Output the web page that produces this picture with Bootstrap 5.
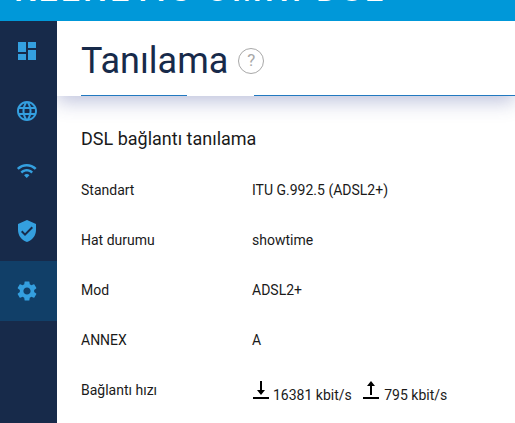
<!DOCTYPE html>
<html lang="tr">
<head>
<meta charset="utf-8">
<link href="https://cdn.jsdelivr.net/npm/bootstrap@5.3.0/dist/css/bootstrap.min.css" rel="stylesheet">
<style>
html,body{height:423px;overflow:hidden;margin:0}
body{font-family:Roboto,sans-serif;color:#1a1a1a;background:#fff}
.topband{height:21px;background:#0098d9;overflow:hidden;flex:none}
.brandtext{color:#fff;font-size:34px;line-height:34px;font-weight:500;letter-spacing:3px;margin-top:-28px;padding-left:14px;white-space:nowrap}
.shell{height:402px}
.siderail{width:57px;background:#172a4a;flex:none}
.railitem{height:60px;color:#349fdf;padding-right:3px}
.railitem.active-item{background:#113f68}
.railitem svg{width:24px;height:24px;fill:currentColor}
.railitem svg.wifiglyph{width:21.5px;height:21.5px}
.mainpane{min-width:0;overflow:hidden}
.headbar{height:75px;padding:4px 0 0 24px;box-shadow:0 6px 18px rgba(60,72,150,.32);position:relative;z-index:1;background:#fff}
.pagetitle{font-size:36px;font-weight:400;color:#172a4a;margin:1px 0 0;line-height:44px}
.helpmark{width:26px;height:26px;border:1px solid #a8a8a8;border-radius:50%;color:#a8a8a8;font-size:17px;line-height:1;margin-left:10px}
.tabline{height:1px;position:absolute;left:0;right:0;bottom:0;display:flex;padding-left:24px}
.tabline i{display:block;height:1px;background:#2279c0}
.seg-one{width:106px}.seg-gap{width:67px;background:transparent!important}.seg-two{flex:1}
.bodypane{padding:24px 24px 0;position:relative}
.sectiontitle{font-size:18px;font-weight:400;line-height:24px;margin:7px 0 29px;color:#1a1a1a}
.inforow{height:50px;font-size:14px;line-height:20px}
.infolabel{width:171px;flex:none}
.arrowicon{width:16px;height:20px;margin-right:4px;vertical-align:0}
.firstarrow{margin-left:1px}
.secondarrow{margin-left:8px;margin-right:5px}
</style>
</head>
<body>
<div class="topband"><div class="brandtext">KEENETIC OMNI DSL</div></div>
<div class="shell d-flex">
  <nav class="siderail d-flex flex-column">
    <div class="railitem d-flex align-items-center justify-content-center">
      <svg viewBox="0 0 24 24"><path d="M3 13h8V3H3v10zm0 8h8v-6H3v6zm10 0h8V11h-8v10zm0-18v6h8V3h-8z"/></svg>
    </div>
    <div class="railitem d-flex align-items-center justify-content-center">
      <svg viewBox="0 0 24 24"><path d="M11.99 2C6.47 2 2 6.48 2 12s4.47 10 9.99 10C17.52 22 22 17.52 22 12S17.52 2 11.99 2zm6.930 6h-2.950c-.32-1.250-.78-2.450-1.380-3.560 1.840.63 3.370 1.910 4.330 3.560zM12 4.040c.83 1.200 1.480 2.530 1.910 3.960h-3.820c.43-1.430 1.080-2.760 1.910-3.960zM4.260 14C4.100 13.360 4 12.690 4 12s.1-1.360.26-2h3.380c-.08.66-.14 1.320-.14 2 0 .68.06 1.340.14 2H4.260zm.82 2h2.950c.32 1.250.78 2.450 1.380 3.560-1.840-.63-3.370-1.900-4.330-3.560zm2.950-8H5.080c.96-1.660 2.490-2.930 4.330-3.560C8.810 5.550 8.350 6.750 8.030 8zM12 19.960c-.83-1.200-1.480-2.530-1.910-3.960h3.820c-.43 1.430-1.080 2.760-1.910 3.960zM14.340 14H9.660c-.09-.66-.16-1.320-.16-2 0-.68.07-1.350.16-2h4.680c.09.65.16 1.320.16 2 0 .68-.07 1.340-.16 2zm.25 5.560c.6-1.110 1.060-2.310 1.380-3.560h2.950c-.96 1.650-2.490 2.930-4.330 3.560zM16.360 14c.08-.66.14-1.320.14-2 0-.68-.06-1.340-.14-2h3.380c.16.64.26 1.310.26 2s-.1 1.360-.26 2h-3.380z"/></svg>
    </div>
    <div class="railitem d-flex align-items-center justify-content-center">
      <svg class="wifiglyph" viewBox="0 0 24 24"><path d="M1 9l2 2c4.970-4.970 13.030-4.970 18 0l2-2C16.930 2.930 7.080 2.930 1 9zm8 8l3 3 3-3c-1.650-1.660-4.340-1.660-6 0zm-4-4l2 2c2.760-2.760 7.240-2.760 10 0l2-2C15.140 9.140 8.870 9.140 5 13z"/></svg>
    </div>
    <div class="railitem d-flex align-items-center justify-content-center">
      <svg viewBox="0 0 24 24"><path d="M12 1L3 5v6c0 5.550 3.840 10.740 9 12 5.160-1.260 9-6.450 9-12V5l-9-4zm-2 16l-4-4 1.410-1.410L10 14.170l6.590-6.590L18 9l-8 8z"/></svg>
    </div>
    <div class="railitem active-item d-flex align-items-center justify-content-center">
      <svg viewBox="0 0 24 24"><path d="M19.140 12.940c.04-.3.06-.61.06-.94 0-.32-.02-.64-.07-.94l2.030-1.580c.18-.14.23-.41.12-.61l-1.920-3.320c-.12-.22-.37-.29-.59-.22l-2.390.96c-.5-.38-1.030-.7-1.620-.94l-.36-2.540c-.04-.24-.24-.41-.48-.41h-3.840c-.24 0-.43.17-.47.41l-.36 2.540c-.59.24-1.130.57-1.620.94l-2.390-.96c-.22-.08-.47 0-.59.22L2.740 8.870c-.12.21-.08.47.12.61l2.030 1.580c-.05.3-.09.63-.09.94s.02.64.07.94l-2.030 1.580c-.18.14-.23.41-.12.61l1.920 3.320c.12.22.37.29.59.22l2.390-.96c.5.38 1.030.7 1.620.94l.36 2.540c.05.24.24.41.48.41h3.840c.24 0 .44-.17.47-.41l.36-2.540c.59-.24 1.130-.56 1.620-.94l2.390.96c.22.08.47 0 .59-.22l1.920-3.320c.12-.22.07-.47-.12-.61l-2.010-1.580zM12 15.600c-1.980 0-3.600-1.620-3.600-3.600s1.620-3.600 3.600-3.600 3.600 1.620 3.600 3.600-1.620 3.600-3.600 3.600z"/></svg>
    </div>
  </nav>
  <main class="mainpane flex-grow-1">
    <header class="headbar d-flex align-items-center">
      <h1 class="pagetitle">Tanılama</h1>
      <span class="helpmark d-flex align-items-center justify-content-center">?</span>
      <div class="tabline"><i class="seg-one"></i><i class="seg-gap"></i><i class="seg-two"></i></div>
    </header>
    <section class="bodypane">
      <h2 class="sectiontitle">DSL bağlantı tanılama</h2>
      <div class="inforow d-flex"><div class="infolabel">Standart</div><div>ITU G.992.5 (ADSL2+)</div></div>
      <div class="inforow d-flex"><div class="infolabel">Hat durumu</div><div>showtime</div></div>
      <div class="inforow d-flex"><div class="infolabel">Mod</div><div>ADSL2+</div></div>
      <div class="inforow d-flex"><div class="infolabel">ANNEX</div><div>A</div></div>
      <div class="inforow d-flex"><div class="infolabel">Bağlantı hızı</div><div>
        <svg class="arrowicon firstarrow" viewBox="0 0 16 20"><path d="M7 1h2v9h3l-4 5-4-5h3zM0 17h16v2H0z"/></svg>16381 kbit/s
        <svg class="arrowicon secondarrow" viewBox="0 0 16 20"><path d="M8 1l4 5H9v9H7V6H4zM0 17h16v2H0z"/></svg>795 kbit/s
      </div></div>
    </section>
  </main>
</div>
<script src="https://cdn.jsdelivr.net/npm/bootstrap@5.3.0/dist/js/bootstrap.bundle.min.js"></script>
</body>
</html>
